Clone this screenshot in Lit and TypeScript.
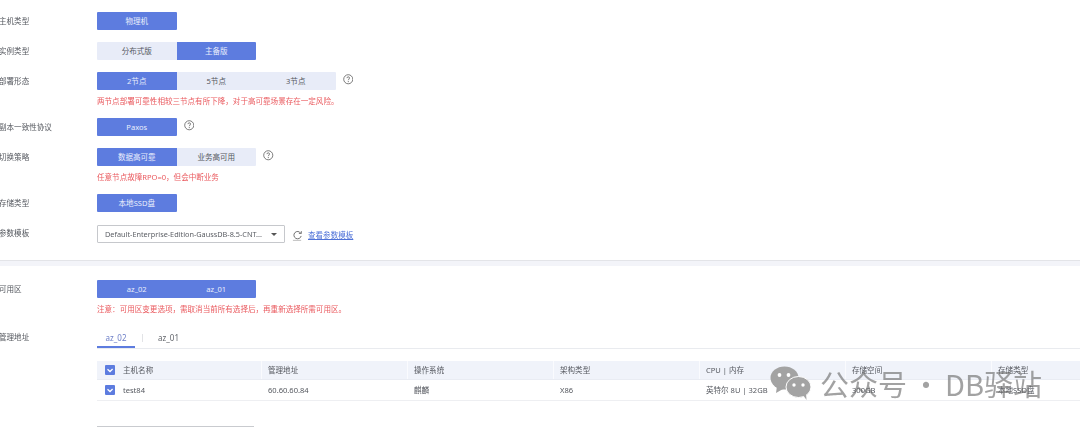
import { LitElement, html, css, nothing } from "lit";
import { customElement } from "lit/decorators.js";

const help = html`<svg class="help" viewBox="0 0 12 12" width="10.500" height="10.500"><circle cx="6" cy="6" r="5.200" fill="none" stroke="#5a5a5a" stroke-width=".9"/><path d="M4.500 4.700c0-1 .7-1.500 1.500-1.500s1.500.6 1.500 1.400c0 1.200-1.500 1.200-1.500 2.500" fill="none" stroke="#5a5a5a" stroke-width=".9"/><circle cx="6" cy="8.700" r=".6" fill="#5a5a5a"/></svg>`;
const check = html`<span class="check"><svg viewBox="0 0 10 10" width="10" height="10"><path d="M2.500 4.300 5 6.500 7.600 4" fill="none" stroke="#fff" stroke-width="1.300"/></svg></span>`;

type Opt = [string, boolean];

@customElement("app-root")
export class AppRoot extends LitElement {
  static styles = css`
    :host { display: block; width: 1080px; height: 427px; overflow: hidden; position: relative; background: #fff;
      font-family: "Noto Sans", "Noto Sans CJK SC", sans-serif; font-size: 7.56px; color: #55585f; }
    .page { filter: blur(0.35px); padding-top: 12px; }
    .row { display: flex; align-items: flex-start; margin-bottom: 12px; }
    .row.addr { margin-top: 14px; margin-bottom: 0; }
    .label { width: 97px; flex: none; margin-left: -1px; line-height: 18px; white-space: nowrap; }
    .lbl { display: block; width: 97px; }
    .body { flex: 1; min-width: 0; display: flex; flex-direction: column; margin-left: 1px; }
    .line { display: flex; align-items: flex-start; }
    .seg { display: flex; border-radius: 1px; overflow: hidden; }
    .opt { width: 79.500px; height: 18px; line-height: 18px; text-align: center; background: #e8ecf8; color: #55585f; }
    .opt.on { background: #5d7cdf; color: #e9eefc; }
    .help { margin: 2px 0 0 7px; }
    .err { color: #ea5a5f; line-height: 10px; margin-top: 6px; white-space: nowrap; }
    .select { width: 188px; height: 18px; margin-top: 1px; border: 1px solid #c6c8cc; border-radius: 1px; box-sizing: border-box; display: flex;
      justify-content: space-between; align-items: center; padding: 0 7px; font-size: 7.300px; background: #fff; color: #5b5e64; }
    .caret { width: 0; height: 0; border: 3px solid transparent; border-top: 3.500px solid #555; border-bottom: 0; }
    .refresh { margin: 6px 0 0 7px; }
    .link { color: #4f72d8; text-decoration: underline; margin-left: 5px; height: 19px; line-height: 22px; }
    .band { height: 5px; margin-top: 17px; background: #f3f4f9; border-top: 1px solid #e3e4e8; margin-bottom: 14px; }
    .tabs { display: flex; border-bottom: 1px solid #e9ebef; height: 20px; align-items: flex-start; width: 983px; font-size: 8px; }
    .tab { width: 38px; text-align: center; line-height: 20px; height: 20px; box-sizing: border-box; color: #6d7fc8; border-bottom: 2px solid #5d7cdf; }
    .tabsep { width: 1px; height: 8px; background: #e2e3e6; margin: 6px 0 0 7px; }
    .tab2 { margin-left: 15px; line-height: 20px; color: #63666c; }
    .table { margin-top: 12px; width: 983px; }
    .tr { display: grid; grid-template-columns: 164px repeat(5, 146px) 1fr; height: 18px; line-height: 18px; }
    .thead { background: #f0f3fa; border-bottom: 1px solid #e9ecf3; }
    .tbody { height: 20px; line-height: 20px; border-bottom: 1px solid #eeeff2; }
    .cell { padding-left: 7px; white-space: nowrap; }
    .thead .cell + .cell { border-left: 1px solid #fafbfe; padding-left: 6px; }
    .first { display: flex; align-items: center; gap: 8px; padding-left: 8px; }
    .check { width: 10px; height: 10px; background: #5d7cdf; border-radius: 1px; display: block; }
    .check svg { display: block; }
    .partial { width: 157px; height: 1px; background: #c9cbcf; margin-top: 25px; margin-left: 97px; }
    .wm { position: absolute; left: 770px; top: 366px; display: flex; align-items: center; gap: 8px; color: rgba(105,105,105,.62);
      font-size: 29px; line-height: 34px; white-space: nowrap; word-spacing: -2px; font-family: "Noto Sans CJK SC", sans-serif; }
  `;

  seg(opts: Opt[]) {
    return html`<div class="seg">${opts.map(([t, on]) => html`<div class="opt ${on ? "on" : ""}">${t}</div>`)}</div>`;
  }

  row(label: string, content: unknown, err?: string) {
    return html`<div class="row"><div class="label"><span class="lbl">${label}</span></div>
      <div class="body"><div class="line">${content}</div>${err ? html`<div class="err">${err}</div>` : nothing}</div></div>`;
  }

  render() {
    const heads = ["管理地址", "操作系统", "架构类型", "CPU | 内存", "存储空间", "存储类型"];
    const vals = ["60.60.60.84", "麒麟", "X86", "英特尔 8U | 32GB", "300GB", "本地SSD盘"];
    return html`<div class="page">
      ${this.row("主机类型", this.seg([["物理机", true]]))}
      ${this.row("实例类型", this.seg([["分布式版", false], ["主备版", true]]))}
      ${this.row("部署形态", html`${this.seg([["2节点", true], ["5节点", false], ["3节点", false]])}${help}`, "两节点部署可靠性相较三节点有所下降，对于高可靠场景存在一定风险。")}
      ${this.row("副本一致性协议", html`${this.seg([["Paxos", true]])}${help}`)}
      ${this.row("切换策略", html`${this.seg([["数据高可靠", true], ["业务高可用", false]])}${help}`, "任意节点故障RPO=0，但会中断业务")}
      ${this.row("存储类型", this.seg([["本地SSD盘", true]]))}
      ${this.row("参数模板", html`<div class="select"><span>Default-Enterprise-Edition-GaussDB-8.5-CNT...</span><i class="caret"></i></div>
        <svg class="refresh" viewBox="0 0 12 12" width="11" height="11"><path d="M9.500 3.500A4 4 0 1 0 10 6.500" fill="none" stroke="#666" stroke-width="1"/><path d="M7.500 3.800h2.700V1.200" fill="none" stroke="#666" stroke-width=".9"/><path d="M1 11.300h9" stroke="#999" stroke-width=".7"/></svg>
        <span class="link">查看参数模板</span>`)}
      <div class="band"></div>
      ${this.row("可用区", this.seg([["az_02", true], ["az_01", true]]), "注意：可用区变更选项，需取消当前所有选择后，再重新选择所需可用区。")}
      <div class="row addr">
        <div class="label"><span class="lbl">管理地址</span></div>
        <div class="body">
          <div class="tabs"><div class="tab">az_02</div><div class="tabsep"></div><div class="tab2">az_01</div></div>
          <div class="table">
            <div class="tr thead"><div class="cell first">${check}<span>主机名称</span></div>${heads.map((h) => html`<div class="cell">${h}</div>`)}</div>
            <div class="tr tbody"><div class="cell first">${check}<span>test84</span></div>${vals.map((h) => html`<div class="cell">${h}</div>`)}</div>
          </div>
        </div>
      </div>
      <div class="partial"></div>
    </div>
    <div class="wm">
      <svg width="42" height="34" viewBox="0 0 42 34"><ellipse cx="14.500" cy="12" rx="14" ry="11.500" fill="#a3a3a3"/><path d="M7 20l-1 7 7-4z" fill="#a3a3a3"/><ellipse cx="28.500" cy="21" rx="12.500" ry="10.500" fill="#a3a3a3" stroke="#fff" stroke-width="1"/><path d="M33 29l3.500 5-.5-7z" fill="#a3a3a3"/><circle cx="9.500" cy="9" r="1.900" fill="#fff"/><circle cx="18.500" cy="9" r="1.900" fill="#fff"/><circle cx="24" cy="19" r="1.700" fill="#fff"/><circle cx="33" cy="19" r="1.700" fill="#fff"/></svg>
      <span>公众号 · DB驿站</span>
    </div>`;
  }
}
